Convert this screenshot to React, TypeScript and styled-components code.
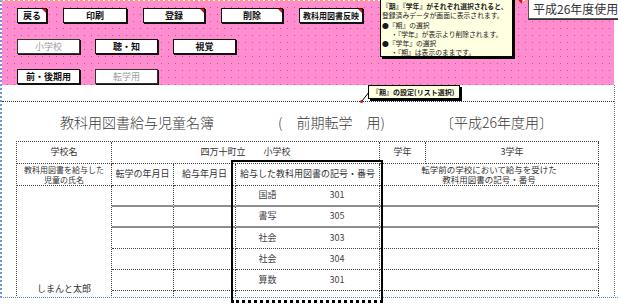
import React from "react";
import styled, { createGlobalStyle } from "styled-components";

const Global = createGlobalStyle`
  html, body { margin: 0; padding: 0; background: #fff; }
  body { font-family: "Noto Sans CJK JP", "Noto Sans", sans-serif; }
`;

const Root = styled.div`
  position: relative;
  width: 618px;
  height: 304px;
  overflow: hidden;
  background: #fff;
  font-family: "Noto Sans CJK JP", "Noto Sans", sans-serif;
  color: #222;
`;

const Sheet = styled.div`
  width: 618px;
  height: 298px;
  box-sizing: border-box;
  border-left: 2px dotted #6b98dc;
  border-top: 1px dashed #f2a43a;
  border-bottom: 1px dotted #4d84d6;
  overflow: hidden;
  display: flex;
  flex-direction: column;
`;

const Ribbon = styled.div`
  flex: none;
  width: 612px;
  height: 84px;
  box-sizing: border-box;
  padding: 7px 0 0 15px;
  background-color: #ff8dd0;
  background-image: radial-gradient(circle, rgba(160, 40, 115, 0.6) 0 0.7px, transparent 1px);
  background-size: 7px 7px;
  background-position: 2px 3px;
  display: flex;
  flex-direction: column;
  gap: 15px;
`;

const ButtonRow = styled.div<{ $gap: number; $extra?: number }>`
  display: flex;
  gap: ${(p) => p.$gap}px;
  margin-bottom: ${(p) => p.$extra ?? 0}px;
`;

const Btn = styled.div<{ $w: number; $off?: boolean; $note?: boolean; $size?: number }>`
  position: relative;
  width: ${(p) => p.$w}px;
  height: 15px;
  box-sizing: border-box;
  border: 1px solid ${(p) => (p.$off ? "#333" : "#111")};
  box-shadow: 1px 1px 0 #111;
  background: #fff;
  font-size: ${(p) => p.$size ?? 9}px;
  font-weight: ${(p) => (p.$off ? 400 : 700)};
  color: ${(p) => (p.$off ? "#9c9c9c" : "#111")};
  display: flex;
  align-items: center;
  justify-content: center;
  white-space: nowrap;
  &::after {
    content: "";
    display: ${(p) => (p.$note ? "block" : "none")};
    position: absolute;
    top: 0;
    right: 0;
    border-top: 4px solid #e01010;
    border-left: 4px solid transparent;
  }
`;

const Body = styled.div`
  flex: 1;
  width: 613px;
  box-sizing: border-box;
  border-right: 1px dotted #777;
  display: flex;
  flex-direction: column;
`;

const Band = styled.div`
  flex: none;
  height: 16px;
  border-bottom: 1px dotted #333;
`;

const TitleRow = styled.div`
  flex: none;
  height: 39px;
  display: grid;
  grid-template-columns: 58px 218px 162px auto;
  align-items: center;
  font-size: 14px;
  font-weight: 300;
  color: #3a3a3a;
  white-space: pre;
`;

const TitleText = styled.span<{ $col: number }>`
  grid-column: ${(p) => p.$col};
`;

const Table = styled.div`
  margin-left: 14px;
  display: grid;
  grid-template-columns: 95px 62px 62px 144px 46px 173px;
  grid-template-rows: 22px 22px repeat(6, 21px);
  border-left: 1px dotted #444;
  border-top: 1px dotted #444;
  width: max-content;
`;

const Cell = styled.div<{
  $span?: number;
  $rows?: number;
  $heavy?: boolean;
  $size?: number;
  $end?: boolean;
}>`
  grid-column: span ${(p) => p.$span ?? 1};
  grid-row: span ${(p) => p.$rows ?? 1};
  box-sizing: border-box;
  border-right: 1px dotted #444;
  border-bottom: ${(p) => (p.$heavy ? "2px solid #8d8d8d" : "1px dotted #444")};
  display: flex;
  align-items: ${(p) => (p.$end ? "flex-end" : "center")};
  justify-content: center;
  padding-bottom: ${(p) => (p.$end ? 17 : 0)}px;
  text-align: center;
  font-size: ${(p) => p.$size ?? 9}px;
  line-height: 1.15;
  color: #333;
  white-space: pre;
`;

const BookCell = styled(Cell)`
  display: grid;
  grid-template-columns: 63px 1fr;
  padding-right: 4px;
  color: #444;
  & > span {
    text-align: center;
  }
`;

const Note = styled.div`
  position: absolute;
  left: 380px;
  top: -3px;
  width: 133px;
  height: 60px;
  box-sizing: border-box;
  border: 1px solid #000;
  box-shadow: 2px 2px 0 #000;
  background: #ffffe1;
  padding: 4px 0 0 1px;
  font-size: 6.8px;
  line-height: 9.3px;
  color: #1a1a1a;
  white-space: nowrap;
`;

const NoteLine = styled.div<{ $bold?: boolean; $indent?: boolean }>`
  font-weight: ${(p) => (p.$bold ? 700 : 400)};
  padding-left: ${(p) => (p.$indent ? 9 : 0)}px;
`;

const YearTag = styled.div`
  position: absolute;
  left: 528px;
  top: -2px;
  width: 95px;
  height: 21px;
  box-sizing: border-box;
  border: 1px solid #555;
  box-shadow: 0 1px 0 #333;
  background: #fff;
  padding-left: 4px;
  font-size: 12px;
  line-height: 19px;
  color: #333;
  white-space: nowrap;
`;

const Callout = styled.div`
  position: absolute;
  left: 368px;
  top: 85px;
  width: 92px;
  height: 14px;
  box-sizing: border-box;
  border: 1px solid #000;
  box-shadow: 2px 2px 0 #000;
  background: #ffffe1;
  padding-left: 3px;
  font-size: 7px;
  font-weight: 700;
  line-height: 12px;
  color: #111;
  white-space: nowrap;
`;

const Overlay = styled.svg`
  position: absolute;
  left: 0;
  top: 0;
  pointer-events: none;
`;

const Selection = styled.div`
  position: absolute;
  left: 231px;
  top: 160px;
  width: 152px;
  height: 143px;
  box-sizing: border-box;
  border: 2px solid #000;
  border-bottom: 3px dotted #000;
  pointer-events: none;
`;

const books: [string, string][] = [
  ["国語", "301"],
  ["書写", "305"],
  ["社会", "303"],
  ["社会", "304"],
  ["算数", "301"],
  ["", ""],
];

export default function App() {
  return (
    <Root>
      <Global />
      <Sheet>
        <Ribbon>
          <ButtonRow $gap={16} $extra={1}>
            <Btn $w={30} $note>戻る</Btn>
            <Btn $w={64}>印刷</Btn>
            <Btn $w={62} $note>登録</Btn>
            <Btn $w={62} $note>削除</Btn>
            <Btn $w={64} $note $size={8}>教科用図書反映</Btn>
          </ButtonRow>
          <ButtonRow $gap={15}>
            <Btn $w={63} $off>小学校</Btn>
            <Btn $w={63}>聴・知</Btn>
            <Btn $w={63}>視覚</Btn>
          </ButtonRow>
          <ButtonRow $gap={15}>
            <Btn $w={63}>前・後期用</Btn>
            <Btn $w={63} $off>転学用</Btn>
          </ButtonRow>
        </Ribbon>
        <Body>
          <Band />
          <TitleRow>
            <TitleText $col={2}>教科用図書給与児童名簿</TitleText>
            <TitleText $col={3}>(　前期転学　用)</TitleText>
            <TitleText $col={4}>〔平成26年度用〕</TitleText>
          </TitleRow>
          <Table>
            <Cell>学校名</Cell>
            <Cell $span={3}>四万十町立　　小学校</Cell>
            <Cell>学年</Cell>
            <Cell>3学年</Cell>

            <Cell $size={8}>{"教科用図書を給与した\n児童の氏名"}</Cell>
            <Cell>転学の年月日</Cell>
            <Cell>給与年月日</Cell>
            <Cell>給与した教科用図書の記号・番号</Cell>
            <Cell $span={2} $size={8.5}>
              {"転学前の学校において給与を受けた\n教科用図書の記号・番号"}
            </Cell>

            <Cell $rows={6} $end>しまんと太郎</Cell>
            {books.map(([subject, code], i) => {
              const heavy = i === 0 || i === 1;
              return (
                <React.Fragment key={i}>
                  <Cell $heavy={heavy} />
                  <Cell $heavy={heavy} />
                  <BookCell $heavy={heavy}>
                    <span>{subject}</span>
                    <span>{code}</span>
                  </BookCell>
                  <Cell $span={2} $heavy={heavy} />
                </React.Fragment>
              );
            })}
          </Table>
        </Body>
      </Sheet>

      <Note>
        <NoteLine $bold>『期』『学年』がそれぞれ選択されると、</NoteLine>
        <NoteLine>登録済みデータが画面に表示されます。</NoteLine>
        <NoteLine>●『期』の選択</NoteLine>
        <NoteLine $indent>・『学年』が表示より削除されます。</NoteLine>
        <NoteLine>●『学年』の選択</NoteLine>
        <NoteLine $indent>・『期』は表示のままです。</NoteLine>
      </Note>
      <YearTag>平成26年度使用</YearTag>
      <Callout>『期』の設定(リスト選択)</Callout>
      <Overlay width="618" height="304" viewBox="0 0 618 304">
        <line x1="369" y1="92" x2="362" y2="101" stroke="#000" strokeWidth="1" />
        <circle cx="361.5" cy="101.5" r="1.5" fill="#e01010" />
        <path d="M518 0 L522 0 L522 4 Z" fill="#e01010" />
      </Overlay>
      <Selection />
    </Root>
  );
}
